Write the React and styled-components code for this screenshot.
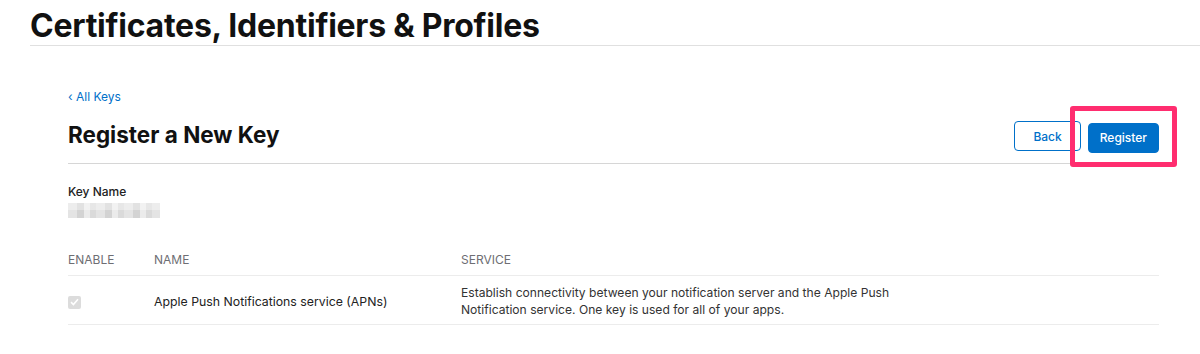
import styled, { createGlobalStyle } from 'styled-components';

const GlobalStyle = createGlobalStyle`
  body {
    margin: 0;
    background: #fff;
    font-family: Inter, "Liberation Sans", sans-serif;
    color: #1d1d1f;
  }
`;

function App() {
  return (
    <>
      <GlobalStyle />
      <Header>
        <Title>Certificates, Identifiers &amp; Profiles</Title>
      </Header>
      <Main>
        <BackLink href="#">‹ All Keys</BackLink>
        <TitleRow>
          <PageTitle>Register a New Key</PageTitle>
          <Actions>
            <Button>Back</Button>
            <Highlight>
              <Button primary>Register</Button>
            </Highlight>
          </Actions>
        </TitleRow>
        <Field>
          <Label>Key Name</Label>
          <Blurred />
        </Field>
        <Table>
          <thead>
            <tr>
              <Th style={{ width: 86 }}>ENABLE</Th>
              <Th style={{ width: 307 }}>NAME</Th>
              <Th>SERVICE</Th>
            </tr>
          </thead>
          <tbody>
            <tr>
              <Td>
                <Check />
              </Td>
              <Td>
                <Name>Apple Push Notifications service (APNs)</Name>
              </Td>
              <Td>
                <Desc>
                  Establish connectivity between your notification server and the Apple Push
                  Notification service. One key is used for all of your apps.
                </Desc>
              </Td>
            </tr>
          </tbody>
        </Table>
      </Main>
    </>
  );
}

function Check() {
  return (
    <CheckBox>
      <svg width="9" height="8" viewBox="0 0 9 8">
        <path d="M1 4.2 L3.4 6.5 L8 1.2" fill="none" stroke="#fff" strokeWidth="1.6" />
      </svg>
    </CheckBox>
  );
}

const Header = styled.header`
  margin-left: 30px;
  padding-top: 6px;
  height: 39px;
  border-bottom: 1px solid #e0e0e0;
`;

const Title = styled.h1`
  margin: 0;
  font-size: 32px;
  font-weight: 700;
  letter-spacing: -0.25px;
  line-height: 40px;
  color: #111;
`;

const Main = styled.main`
  padding: 43px 41px 0 68px;
`;

const BackLink = styled.a`
  display: block;
  font-size: 12px;
  line-height: 16px;
  color: #0070c9;
  text-decoration: none;
`;

const TitleRow = styled.div`
  display: flex;
  align-items: center;
  justify-content: space-between;
  height: 58px;
  border-bottom: 1px solid #d6d6d6;
`;

const PageTitle = styled.h2`
  margin: 0;
  font-size: 22.5px;
  font-weight: 700;
  color: #111;
`;

const Actions = styled.div`
  display: flex;
  align-items: center;
  margin-right: -18px;
  margin-top: 4px;
`;

const Highlight = styled.div`
  margin-left: -11px;
  padding: 12px 13px 9px 13px;
  border: 5px solid #ff2d6f;
  border-radius: 3px;
`;

const Button = styled.button`
  height: 30px;
  padding: 0 ${(p) => (p.primary ? '11px' : '18px')};
  border-radius: 4px;
  border: 1px solid #0070c9;
  background: ${(p) => (p.primary ? '#0070c9' : '#fff')};
  color: ${(p) => (p.primary ? '#fff' : '#0070c9')};
  font-family: Inter, "Liberation Sans", sans-serif;
  font-size: 12px;
  font-weight: 500;
`;

const Field = styled.div`
  padding-top: 20px;
`;

const Label = styled.div`
  font-size: 12px;
  font-weight: 500;
  line-height: 16px;
  color: #222;
`;

const Blurred = styled.div`
  margin-top: 3px;
  width: 92px;
  height: 15px;
  background:
    linear-gradient(180deg, rgba(255, 255, 255, 0.35) 0 50%, transparent 50%),
    repeating-linear-gradient(90deg, #e4e4e4 0 9px, #d3d3d3 9px 16px, #ebebeb 16px 22px, #dadada 22px 28px);
`;

const Table = styled.table`
  width: 100%;
  margin-top: 34px;
  border-collapse: collapse;
`;

const Th = styled.th`
  text-align: left;
  font-size: 12px;
  font-weight: 400;
  line-height: 16px;
  color: #6e6e73;
  padding: 0 0 7px 0;
  border-bottom: 1px solid #ececec;
`;

const Td = styled.td`
  font-size: 12px;
  color: #222;
  padding: 8px 0 6px 0;
  vertical-align: middle;
  border-bottom: 1px solid #ececec;
`;

const Name = styled.span`
  font-size: 12.3px;
`;

const Desc = styled.div`
  width: 440px;
  font-size: 12.1px;
  line-height: 17px;
  color: #333;
`;

const CheckBox = styled.span`
  display: inline-flex;
  align-items: center;
  justify-content: center;
  width: 13px;
  height: 13px;
  border-radius: 2px;
  background: #dcdcdc;
  vertical-align: middle;
`;

export default App;
